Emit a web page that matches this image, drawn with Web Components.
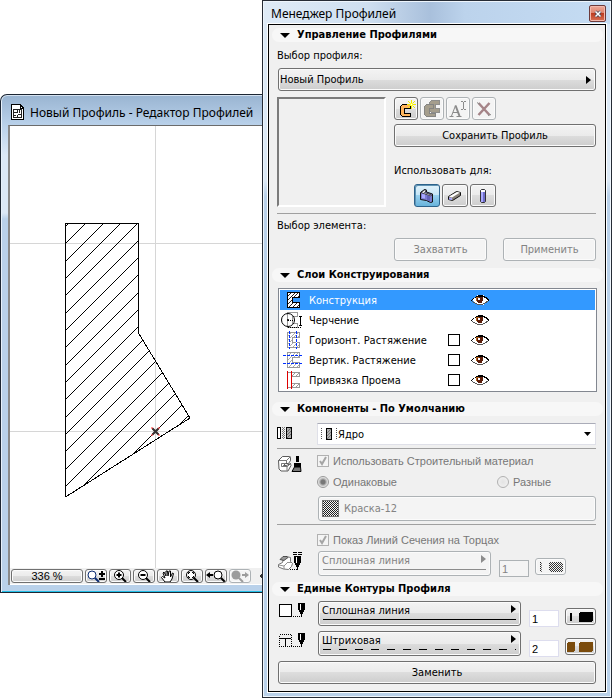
<!DOCTYPE html>
<html lang="ru">
<head>
<meta charset="utf-8">
<title>Менеджер Профилей</title>
<style>
  body { margin: 0; background: #fff; font-family: "DejaVu Sans Condensed", "Noto Sans", sans-serif; font-size: 11px; color: #000; }
</style>
</head>
<body>
<profile-desktop></profile-desktop>
<script>
const NIB = (x, y) => `
  <path d="M${x} ${y}h7v7h-1v2h-1v2h-3v-2h-1v-2h-1z" fill="#000"/><path d="M${x + 3} ${y + 11}h1v3h-1z" fill="#000"/><path d="M${x + 2} ${y + 1}h1v6h-1z" fill="#fff"/>`;

/* C-shaped profile section with diagonal hatching */
const SECTION = (outline, hatch) => `
  <path d="M7 2h13v6h-7v5h7v5h-13z" fill="#fff"/>
  <path d="M8 6l3-3M8 10l7-7M8 14l5-5M13 8l5-5M17 8l2-2M9 17l4-4M13 17l4-4M17 17l2-2" stroke="${hatch}" fill="none"/>
  <path d="M7.500 2.500h12v5h-7v5h7v5h-12z" fill="none" stroke="${outline}"/>`;

const ICONS = {
  page: [13, 16, `<path d="M1 .5h8l3.500 3.500v11.500h-12v-15z" fill="#fff" stroke="#000"/><path d="M9 .5v3.500h3.500" fill="none" stroke="#000"/><path d="M2.500 5.500h8v8h-8zM6.500 5.500v3M2.500 8.500h4M6.500 10.500h4M6.500 10.500v3M8.500 5.500v3M2.500 11.500h2" fill="none" stroke="#222"/>`],
  close: [8, 8, `<path d="M1.500 1.500l5 5M6.500 1.500l-5 5" stroke="#454556" stroke-width="3"/><path d="M1.500 1.500l5 5M6.500 1.500l-5 5" stroke="#fff" stroke-width="1.500"/>`],
  tri: [10, 5, `<path d="M0 0h10L5 5z"/>`],
  newProfile: [20, 18, `<path d="M4.500 6.500l2-2h8v4h-6v5h6v3h-8l-2-2z" fill="#ffb65e" stroke="#000"/><path d="M15 0h1v9h-1zM11 4h9v1h-9z" fill="#f4ec00"/><path d="M12 1l7 7M19 1l-7 7" stroke="#f4ec00"/><path d="M14 3h3v3h-3z" fill="#ff3"/><path d="M15 4h1v1h-1z" fill="#fff"/>`],
  copyProfile: [20, 18, `<path d="M7.500 2.500l2-2h8v4h-4v4h4v4h-8l-2-2z" fill="#a59e8d" stroke="#8e8e8c"/><path d="M2.500 6.500l2-2h7v4h-4v5h6v3h-9l-2-2z" fill="#a59e8d" stroke="#858583"/>`],
  text: [20, 18, `<path d="M1.500 16.500h4M8.500 16.500h5M3.500 16L7.500 5.500M5 12.500h5" fill="none" stroke="#8a8a8a"/><path d="M7.500 5.500L11.500 16" stroke="#8a8a8a" stroke-width="2"/><path d="M13 1.500h2M16 1.500h2M15.500 2v7M13 9.500h2M16 9.500h2" fill="none" stroke="#8a8a8a"/>`],
  del: [20, 18, `<path d="M4.500 3l11 12M15.500 3l-11 12" stroke="#a58488" stroke-width="2.500"/><path d="M3 2.500l3 2M14 15.500l3-1" stroke="#8c8c8c"/>`],
  wall: [18, 16, `<path d="M2.500 4.500l4-3 2 .5v2l6 2v8l-2 .500-4-2-6-1z" fill="#7c7bd0" stroke="#111"/><path d="M3 4.500l3.500-2.500 2 .5-2 2 7 2.500-1 1z" fill="#f4f4f4" stroke="#111" stroke-width=".7"/><path d="M9 7l3 1.500v5L9 12z" fill="#6362b9"/><path d="M4 6l3 .5v4L4 10z" fill="#aaa9ff"/>`],
  beam: [18, 16, `<path d="M2.500 8.500l8-5 4 1v3l-8 5-4-1z" fill="#888078" stroke="#111"/><path d="M3 8.500l8-4.500 3 .5-8 5z" fill="#fff"/><path d="M3 9.500l3 .5v2l-3-.5z" fill="#aaa9ff"/>`],
  column: [18, 16, `<path d="M6.500 2.500l1-1h3l1 1v11l-1 1h-3l-1-1z" fill="#6e6dc8" stroke="#333"/><path d="M7 2h4v2H7z" fill="#fff"/><path d="M7 4h2v10H7z" fill="#aaa9ff"/>`],
  layerSolid: [24, 20, SECTION("#000", "#222")],
  layerDraw: [24, 20, `<path d="M7.500 2.500h10v4h-5v7h5v4h-10z" fill="#fff" stroke="#999"/><circle cx="8" cy="10" r="6.500" fill="none" stroke="#000" shape-rendering="auto"/><circle cx="8" cy="10" r="1" shape-rendering="auto"/><path d="M8 10.500h7" stroke="#000" stroke-dasharray="1 1"/><path d="M20 7h1v9h-1zM19 6h3v1h-3zM19 15h3v1h-3z"/><path d="M8 17.500h14" stroke="#000" stroke-dasharray="1 1"/>`],
  layerH: [24, 20, SECTION("#999", "#aaa") + `<path d="M9 1h1v18h-1zM16 1h1v18h-1z" fill="#fff"/><path d="M9.500 1v18M16.500 1v18" stroke="#0030ff" stroke-dasharray="3 1"/>`],
  layerV: [24, 20, SECTION("#999", "#aaa") + `<path d="M3 5h20v1h-20zM3 13h20v1h-20z" fill="#fff"/><path d="M3 5.500h20M3 13.500h20" stroke="#0030ff" stroke-dasharray="3 1"/>`],
  layerOpen: [24, 20, `<path d="M7.500 2.500h12v4h-8v7h8v4h-12z" fill="#fff" stroke="#999"/><path d="M12 6l3-3M16 6l3-3M12 17l3-3M16 17l3-3" stroke="#999"/><path d="M7 1h1v18h-1zM11 1h1v18h-1z" fill="#e00000"/>`],
  eye: [18, 12, `<path d="M1 6l3-3 3-2h5l3 2 3 3-3 3-3 2H7L4 9z" fill="#fff"/><path d="M0 6h1V5h1V4h2V3h1V2h2V1h5v1h2v1h2v1h1v1h1v2h-1V6h-1V5h-1V4h-2V3H5v1H3v1H2v1H1v1H0z" fill="#000"/><path d="M1 7h1v1h2v1h2v1h6V9h2V8h1V7h2v1h-1v1h-2v1h-2v1H6v-1H4V9H2V8H1z" fill="#555"/><path d="M5 3h7v4h-1v2H7V8H6V6H5z" fill="#5a1d0a"/><path d="M5 3h3v1H6v3H5z" fill="#b5651d"/><path d="M7 4h2v2H7z" fill="#fff"/>`],
  component: [16, 14, `<path d="M.5 1.500h3v11h-3z" fill="#fff" stroke="#000"/><path d="M5.500 1v12M7.500 1v12" stroke="#777" stroke-dasharray="1 1"/><path d="M6.500 2v12" stroke="#777" stroke-dasharray="1 1"/><path d="M10 2h4v10h-4z" fill="#aaa"/><path d="M10 6l4-4M10 9l4-4M10 12l4-4" stroke="#666"/><path d="M9.500 1.500h5v11h-5z" fill="none" stroke="#000"/>`],
  core: [18, 14, `<path d="M.5 1v12M15.500 1v12" stroke="#555" stroke-dasharray="1 1"/><path d="M6 2h4v10h-4z" fill="#b0b0b0"/><path d="M6 6l4-4M6 9l4-4M6 12l4-4" stroke="#777"/><path d="M5.500 1.500h5v11h-5z" fill="none" stroke="#000"/>`],
  brush: [26, 18, `<path d="M1.500 5.500l4-4h7l1 1v3l-2 3h-3l-2 2h3l4-2 .5 2-3 5.500h-7l-2-2z" fill="#fff" stroke="#333" stroke-width=".8"/><path d="M1.500 5.500h8l4-4M9.500 5.500v3M4.500 8.500h4M4.500 8.500v3h6l3-3M10 11.500v4" fill="none" stroke="#555" stroke-width=".8"/><path d="M19 1h3v6h-3zM17 8h7v4h-7z" fill="#000"/><path d="M17.500 12h6l.5 4.500h-9z" fill="#777" stroke="#000"/>`],
  endNib: [26, 20, `<g shape-rendering="auto"><path d="M.5 12.500l4-2 1-4 3-2 4 1v4l2 2-1 3-3 3-5-.500-5-2z" fill="#fff" stroke="#555" stroke-width=".8"/><path d="M2 7.500l3-3h4l1 1-4 3z" fill="#999" stroke="#333" stroke-width=".8"/><path d="M1 13l5 1 4-4M6 14v3M10 10.500h4" fill="none" stroke="#777" stroke-width=".8"/></g><path d="M15 .5h10M15 2.500h10" stroke="#000" stroke-dasharray="4 1"/>${NIB(16, 4)}<path d="M12 17.500h7" stroke="#000" stroke-dasharray="1 1"/>`],
  contour: [28, 16, `<path d="M1.500 2.500h12v12h-12z" fill="#fff" stroke="#000"/>${NIB(20, 1)}<path d="M15 14.500h8" stroke="#000" stroke-dasharray="1 1"/>`],
  inner: [28, 16, `<path d="M1.500 2.500h12v12h-12z" fill="none" stroke="#000" stroke-dasharray="1 1"/><path d="M2 6.500h11M7.500 7v7" stroke="#000"/>${NIB(20, 1)}<path d="M15 14.500h8" stroke="#000" stroke-dasharray="1 1"/>`],
  penOff: [27, 12, `<defs><pattern id="pk" width="2" height="2" patternUnits="userSpaceOnUse"><path d="M0 0h1v1H0zM1 1h1v1H1z" fill="#333"/></pattern></defs><path d="M3.500 1v10" stroke="#222" stroke-dasharray="1 1"/><path d="M4.500 2v9" stroke="#777" stroke-dasharray="1 1"/><rect x="12" y="1" width="14" height="10" rx="3" fill="url(#pk)"/>`],
  penBlack: [27, 12, `<path d="M3 2h2v8H3z"/><rect x="12" y="1" width="14" height="10" rx="2"/>`],
  penBrown: [27, 12, `<g fill="#7a4b0c"><rect x="0" y="1" width="8" height="10" rx="2"/><rect x="12" y="1" width="14" height="10" rx="2"/></g>`],
  swatch: [17, 17, `<defs><pattern id="sw" width="2" height="2" patternUnits="userSpaceOnUse"><path d="M0 0h1v1H0zM1 1h1v1H1z" fill="#222"/></pattern></defs><path d="M.5.5h16v16H.5z" fill="url(#sw)" stroke="#777"/>`],
  zoomPm: [20, 12, `<circle cx="6" cy="5" r="4" fill="#fff" stroke="#0b2c72"/><path d="M9 8l4 4" stroke="#0b2c72" stroke-width="2"/><path d="M13 4h6M16 1v6M13 9h6" stroke="#000" stroke-width="2"/>`],
  zoomIn: [20, 12, `<circle cx="9" cy="5" r="4.500" fill="#fff" stroke="#000"/><path d="M12 8l4 4" stroke="#000" stroke-width="2"/><path d="M6.500 5h5M9 2.500v5" stroke="#000" stroke-width="2"/>`],
  zoomOut: [20, 12, `<circle cx="9" cy="5" r="4.500" fill="#fff" stroke="#000"/><path d="M12 8l4 4" stroke="#000" stroke-width="2"/><path d="M6.500 5h5" stroke="#000" stroke-width="2"/>`],
  hand: [20, 12, `<path d="M7 12L3.500 7.500l1-1L7 8 5 3l1-1 2 4V1h1.500L10 6l1-5h1.500v6l2-4 1 .5L14 9l-2 3z" fill="#fff" stroke="#000"/>`],
  fit: [20, 12, `<circle cx="9" cy="5" r="4.500" fill="#fff" stroke="#000"/><path d="M12 8l4 4" stroke="#000" stroke-width="2"/><path d="M6.500 4V2.500H8M10 2.500h1.500V4M6.500 6v1.500H8M10 7.500h1.500V6" fill="none" stroke="#000"/>`],
  prev: [20, 12, `<path d="M0 5l4-3v2h3v2H4v2z"/><circle cx="12" cy="5" r="4" fill="#fff" stroke="#000"/><path d="M15 8l4 4" stroke="#000" stroke-width="2"/>`],
  next: [20, 12, `<circle cx="6" cy="5" r="4.500" fill="#9c9c9c"/><path d="M9 8l4 4" stroke="#9c9c9c" stroke-width="2"/><path d="M19 5l-4-3v2h-3v2h3v2z" fill="#9c9c9c"/>`],
  back: [5, 8, `<path d="M5 0v8L0 4z" fill="#333"/>`]
};

/* Control styles shared by the elements that hold form controls */
const CONTROLS = `
  * { box-sizing: border-box; }
  button, select, input { font: inherit; color: inherit; margin: 0; padding: 0; }
  label { white-space: nowrap; }
  .bevel { border: 1px solid #707070; border-radius: 3px; background-color: #dedede;
    background-image: linear-gradient(#f3f3f3, #ebebeb 50%, #dddddd 50%, #cdcdcd); box-shadow: inset 0 0 0 1px #fbfbfb; }
  .bevel:disabled { border-color: #adb2b5; background-color: #f4f4f4; background-image: none; color: #838383; opacity: 1; }
`;

function define(name, html, init) {
  const template = document.createElement("template");
  template.innerHTML = html;
  customElements.define(name, class extends HTMLElement {
    constructor() {
      super();
      this.attachShadow({ mode: "open" }).append(template.content.cloneNode(true));
    }
    connectedCallback() {
      if (this.ready) return;
      this.ready = true;
      if (init) init(this, this.shadowRoot);
    }
  });
}

define("ui-icon", `<style>:host{display:block;flex:none} svg{display:block}</style>`, (el, root) => {
  const [w, h, body] = ICONS[el.getAttribute("name")];
  const smooth = el.hasAttribute("smooth") ? "" : ' shape-rendering="crispEdges"';
  root.innerHTML += `<svg width="${w}" height="${h}" viewBox="0 0 ${w} ${h}"${smooth} aria-hidden="true">${body}</svg>`;
});

/* Bevelled button: text or an icon in its slot */
define("push-button", `<style>${CONTROLS}
  :host { display: block; }
  button { display: flex; align-items: center; justify-content: center; width: 100%; height: 100%; font-size: 11px; overflow: hidden; }
  :host([pressed]) button { border-color: #2c628b; background-image: linear-gradient(#e1f2fb, #c4e5f6 50%, #98d1ef 50%, #68b3db); box-shadow: inset 1px 1px 0 #5f93b4; }
  :host([tool]) button { font-family: "Liberation Sans", sans-serif; }
</style><button class="bevel" type="button"><slot></slot></button>`, (el, root) => {
  const b = root.querySelector("button");
  b.disabled = el.hasAttribute("off");
  if (el.hasAttribute("label")) b.setAttribute("aria-label", el.getAttribute("label"));
  if (el.hasAttribute("pressed")) b.setAttribute("aria-pressed", "true");
});

/* Pop-up list: bevelled face, right arrow, optional line sample under the text */
const arrow = c => `url("data:image/svg+xml,%3Csvg xmlns='http://www.w3.org/2000/svg' width='5' height='8'%3E%3Cpath d='M0 0v8l5-4z' fill='%23${c}'/%3E%3C/svg%3E")`;
define("popup-select", `<style>${CONTROLS}
  :host { display: block; min-width: 0; --face: linear-gradient(#f3f3f3, #ebebeb 50%, #dddddd 50%, #cdcdcd); --ink: #000; --arrow: ${arrow("000")}; }
  :host([off]) { --face: linear-gradient(#f4f4f4, #f4f4f4); --ink: #8c8c8c; --arrow: ${arrow("8c8c8c")}; }
  .box { display: grid; height: 100%; align-items: center; }
  select, ui-icon { grid-area: 1 / 1; }
  ui-icon { margin-left: 4px; pointer-events: none; z-index: 1; }
  select.bevel { appearance: none; width: 100%; height: 100%; font-size: 11px; padding: 0 16px 0 1px;
    background-image: var(--arrow), var(--face); background-repeat: no-repeat; background-position: right 4px center, 0 0; }
  :host([sample]) select.bevel { padding: 0 16px 6px 3px; --line: linear-gradient(var(--ink), var(--ink));
    background-image: var(--arrow), var(--line), var(--face);
    background-size: 5px 8px, calc(100% - 8px) 1px, 100% 100%; background-position: right 4px top 3px, 4px 17px, 0 0; }
  :host([sample="dash"]) select.bevel { --line: repeating-linear-gradient(90deg, var(--ink) 0 8px, transparent 8px 16px); }
  :host([icon]) select.bevel { padding-left: 25px; background-position: right 4px top 4px, 0 0; }
</style><div class="box"><select class="bevel"><option></option></select></div>`, (el, root) => {
  const s = root.querySelector("select");
  s.options[0].textContent = el.getAttribute("value");
  s.setAttribute("aria-label", el.getAttribute("label"));
  s.disabled = el.hasAttribute("off");
  if (el.hasAttribute("icon")) root.querySelector(".box").insertAdjacentHTML("beforeend", `<ui-icon name="${el.getAttribute("icon")}"></ui-icon>`);
});

/* Collapsible section of the palette */
define("panel-section", `<style>
  :host { display: block; }
  h2 { display: flex; align-items: center; gap: 7px; height: 14px; margin: 0 2px 0 3px; padding-left: 8px; border-radius: 7px; background: #f7f7f7; font-size: 11px; line-height: 14px; white-space: nowrap; }
  .body { padding: 0 9px 0 8px; }
</style><h2><ui-icon smooth name="tri"></ui-icon><span></span></h2><div class="body"><slot></slot></div>`, (el, root) => {
  root.querySelector("span").textContent = el.getAttribute("heading");
});

define("layer-row", `<style>${CONTROLS}
  :host { display: block; font-size: 11px; }
  :host([selected]) { background: #3399ff; color: #fff; }
  .row { display: grid; grid-template-columns: 24px 136px 12px 1fr; column-gap: 4px; align-items: center; height: 20px; }
  input { appearance: none; width: 12px; height: 12px; border: 1px solid #000; background: #fff; display: block; }
  button { border: 0; background: none; display: block; width: 18px; margin-left: 7px; }
  label, .name { padding-left: 1px; white-space: nowrap; }
</style><div class="row"></div>`, (el, root) => {
  const name = el.getAttribute("name"), check = el.hasAttribute("check");
  root.querySelector(".row").innerHTML = `<ui-icon name="${el.getAttribute("icon")}"></ui-icon>` +
    (check ? `<label for="c">${name}</label><input type="checkbox" id="c">` : `<span class="name">${name}</span><span></span>`) +
    `<button type="button" aria-label="Видимость"><ui-icon name="eye"></ui-icon></button>`;
});

/* Disabled tick box or radio with its label */
define("off-choice", `<style>${CONTROLS}
  :host { display: block; font-family: "Liberation Sans", sans-serif; font-size: 11px; color: #777; }
  label { display: flex; align-items: center; gap: 4px; }
  input { appearance: none; display: block; width: 12px; height: 12px; flex: none; border: 1px solid #b1b1b1; background: #f2f2f2; }
  input[type=radio] { border-radius: 50%; background: radial-gradient(#e3e3e3, #f4f4f4); }
  input[type=radio]:checked { background: radial-gradient(#777 0 2px, #aaa 3px, #eee 5px); border-color: #999; }
  input[type=checkbox]:checked { background: #f4f4f4 url("data:image/svg+xml,%3Csvg xmlns='http://www.w3.org/2000/svg' width='10' height='10'%3E%3Cpath d='M2 5l2 3 4-7' fill='none' stroke='%23a5a5a5' stroke-width='2'/%3E%3C/svg%3E") center no-repeat; }
</style><label><input disabled><span></span></label>`, (el, root) => {
  const i = root.querySelector("input");
  i.type = el.getAttribute("type");
  i.checked = el.hasAttribute("on");
  root.querySelector("span").textContent = el.getAttribute("text");
});

/* Line type, pen number and pen colour in one row */
define("pen-row", `<style>${CONTROLS}
  :host { display: block; }
  :host([off]) { padding-right: 30px; }
  .row { display: grid; grid-template-columns: 40px 1fr 30px 37px; height: 25px; }
  ui-icon { padding-top: 1px; }
  popup-select { height: 25px; margin-right: 8px; }
  input { width: 30px; height: 17px; margin-top: 9px; padding: 0 2px; border: 1px solid #dde; background: #fff; font-family: "Liberation Sans", sans-serif; font-size: 11px; }
  input:disabled { background: #f4f4f4; border-color: #adb2b5; color: #838383; }
  push-button { width: 31px; height: 17px; margin: 7px 0 0 6px; }
</style><div class="row"></div>`, (el, root) => {
  const a = n => el.getAttribute(n), off = el.hasAttribute("off");
  root.querySelector(".row").innerHTML = `<ui-icon name="${a("icon")}"></ui-icon>
    <popup-select label="Тип линии" value="${a("line")}" sample="${a("sample")}" ${off ? "off" : ""}></popup-select>
    <input type="text" aria-label="Номер пера" value="${a("number")}" ${off ? "disabled" : ""}>
    <push-button label="Цвет пера" ${off ? "off" : ""}><ui-icon name="${a("pen")}"></ui-icon></push-button>`;
});

define("profile-editor", `<style>
  :host { display: flex; flex-direction: column; box-sizing: border-box; overflow: hidden; border: 1px solid #1c2633; border-right: 0; border-top-left-radius: 7px;
    padding: 0 0 7px 7px; box-shadow: inset 1px 0 0 #e7f1fb, inset 0 1px 0 #d5e2f0, inset 0 -1px 0 #22c0e8;
    background: linear-gradient(#99b4d1, #b9d1ea 30px, #dbe8f6 60px, #dbe8f6 118px, #b9d1ea 124px); }
  header { display: flex; align-items: center; gap: 6px; height: 30px; padding: 4px 0 0 3px; box-sizing: border-box; }
  h1 { margin: 0; font-size: 12px; font-weight: 400; white-space: nowrap; font-family: "Noto Sans", sans-serif; }
  main { border: 1px solid #6b6b6b; border-width: 1px 0 0 2px; border-left-color: #8a8a8a; background: #fff; }
  .canvas { display: block; width: 100%; height: 442px; }
  nav { display: flex; gap: 2px; align-items: center; height: 17px; padding: 0 0 0 1px; background: #f0f0f0; border-bottom: 1px solid #fff; box-sizing: border-box; }
  push-button { width: 22px; height: 14px; flex: none; }
  push-button.scale { width: 72px; }
  .percent { font-size: 11px; }
  .back { margin-left: 6px; }
</style>
<header><ui-icon name="page"></ui-icon><h1>Новый Профиль - Редактор Профилей</h1></header>
<main>
  <svg class="canvas" viewBox="10 126 252 442" preserveAspectRatio="xMinYMin slice" shape-rendering="crispEdges" role="img" aria-label="Сечение профиля">
    <defs><clipPath id="section"><path d="M66 223.500H138.500V333L190 418 66 497z"/></clipPath></defs>
    <path d="M155.500 126V568M10 243.500H262M10 431.500H262" stroke="#d6d6d6"/>
    <g class="hatch" clip-path="url(#section)" stroke="#000"></g>
    <path d="M65.500 497V223.500H138.500V333" fill="none" stroke="#000"/>
    <path d="M138.500 333L190 418 65.500 497" fill="none" stroke="#000"/>
    <path d="M151.500 427.500l8 8M159.500 427.500l-8 8" stroke="#f33" shape-rendering="auto" stroke-width="1.500"/>
    <path d="M152.500 428.500l6 6M158.500 428.500l-6 6" stroke="#333" stroke-width="2" shape-rendering="auto"/>
  </svg>
  <nav aria-label="Масштаб">
    <push-button tool class="scale"><span class="percent">336 %</span></push-button>
    <push-button label="Масштаб"><ui-icon smooth name="zoomPm"></ui-icon></push-button>
    <push-button label="Увеличить"><ui-icon smooth name="zoomIn"></ui-icon></push-button>
    <push-button label="Уменьшить"><ui-icon smooth name="zoomOut"></ui-icon></push-button>
    <push-button label="Панорама"><ui-icon smooth name="hand"></ui-icon></push-button>
    <push-button label="Показать все"><ui-icon smooth name="fit"></ui-icon></push-button>
    <push-button label="Назад"><ui-icon smooth name="prev"></ui-icon></push-button>
    <push-button label="Вперед" off><ui-icon smooth name="next"></ui-icon></push-button>
    <ui-icon class="back" name="back"></ui-icon>
  </nav>
</main>`, (el, root) => {
  /* Hatch lines start every 52/3 px down the left edge, on whole pixels so that they stay one pixel thin */
  let d = "";
  for (let k = -6; k <= 12; k++) d += `M66 ${Math.round(330 + k * 52 / 3)}l140-140`;
  root.querySelector(".hatch").innerHTML = `<path d="${d}"/>`;
});

define("profile-manager", `<style>${CONTROLS}
  :host { display: flex; flex-direction: column; box-sizing: border-box; border: 1px solid #262c36; padding: 0 5px 5px; font-size: 11px;
    background: linear-gradient(90deg, #dfebf7, #cfdff0 30%, #a9c0dc 48%, #bcd3ec 58%, #c5dcf3) 0 0 / 100% 23px no-repeat,
      linear-gradient(#dce9f6 0 180px, #b9d1ea 195px);
    box-shadow: inset 0 0 0 1px #eef5fc; }
  header { display: flex; align-items: center; justify-content: space-between; height: 23px; padding: 2px 0 0 3px; }
  h1 { margin: 0; font: 400 12px "Noto Sans", sans-serif; white-space: nowrap; }
  .close { display: flex; align-items: center; justify-content: center; width: 17px; height: 17px; padding: 0; border: 1px solid #6d3b3b; border-radius: 2px; background: linear-gradient(#eda99a, #dd8069 50%, #bd3c20 50%, #d97155); box-shadow: inset 0 0 0 1px #f2b9ad; }
  .panel { flex: 1; border: 1px solid #000; background: #f0f0f0; padding: 3px 0 6px; display: flex; flex-direction: column; outline: 1px solid #fff; }
  .text { display: block; height: 16px; line-height: 16px; }
  hr { border: 0; height: 1px; background: #a0a0a0; margin: 0; }
  .manage { display: grid; grid-template-columns: 109px 1fr; column-gap: 8px; margin-top: 6px; }
  .preview { height: 110px; border: 2px solid; border-color: #7b7b7b #fff #fff #7b7b7b; }
  .icons, .uses { display: flex; gap: 2px; }
  .icons push-button { width: 24px; height: 23px; }
  .uses push-button { width: 26px; height: 23px; }
  .uses { margin: 5px 0 0 20px; }
  .capture { display: grid; grid-template-columns: 1fr 1fr; gap: 16px; margin: 4px 0 0 117px; }
  .capture push-button, .save, .replace { height: 23px; }
  .list { margin: 6px -1px 0 1px; border: 1px solid #828790; background: #fff; padding: 1px; }
  .split { display: grid; grid-template-columns: 40px 1fr; align-items: start; }
  .combo { display: grid; align-items: center; height: 22px; border: 1px solid #dfe0e8; border-top-color: #aaacb8; background: #fff; }
  .combo select, .combo ui-icon { grid-area: 1 / 1; }
  .combo ui-icon { margin-left: 3px; z-index: 1; pointer-events: none; }
  .combo select { appearance: none; width: 100%; height: 100%; border: 0; padding-left: 20px; font-size: 11px;
    background: url("data:image/svg+xml,%3Csvg xmlns='http://www.w3.org/2000/svg' width='7' height='4'%3E%3Cpath d='M0 0h7L3.500 4z'/%3E%3C/svg%3E") right 4px center no-repeat; }
  .radios { display: grid; grid-template-columns: 180px 1fr; margin: 9px 0 8px; }
  .rows { display: grid; gap: 5px; margin: 5px 0 0 1px; }
</style>
<header><h1>Менеджер Профилей</h1><button class="close" type="button" aria-label="Закрыть"><ui-icon smooth name="close"></ui-icon></button></header>
<div class="panel">
  <panel-section heading="Управление Профилями">
    <span class="text" style="margin:6px 0 4px">Выбор профиля:</span>
    <popup-select style="height:23px;margin-left:1px" label="Выбор профиля" value="Новый Профиль"></popup-select>
    <div class="manage">
      <div class="preview"></div>
      <div>
        <div class="icons">
          <push-button label="Новый"><ui-icon name="newProfile"></ui-icon></push-button>
          <push-button label="Дублировать" off><ui-icon name="copyProfile"></ui-icon></push-button>
          <push-button label="Переименовать" off><ui-icon smooth name="text"></ui-icon></push-button>
          <push-button label="Удалить" off><ui-icon smooth name="del"></ui-icon></push-button>
        </div>
        <push-button class="save" style="margin:4px 0 16px">Сохранить Профиль</push-button>
        <span class="text">Использовать для:</span>
        <div class="uses">
          <push-button label="Стена" pressed><ui-icon smooth name="wall"></ui-icon></push-button>
          <push-button label="Балка"><ui-icon smooth name="beam"></ui-icon></push-button>
          <push-button label="Колонна"><ui-icon smooth name="column"></ui-icon></push-button>
        </div>
      </div>
    </div>
    <hr style="margin:6px 0 4px">
    <span class="text">Выбор элемента:</span>
    <div class="capture"><push-button off>Захватить</push-button><push-button off>Применить</push-button></div>
  </panel-section>
  <panel-section heading="Слои Конструирования" style="margin-top:7px">
    <div class="list">
      <layer-row selected icon="layerSolid" name="Конструкция"></layer-row>
      <layer-row icon="layerDraw" name="Черчение"></layer-row>
      <layer-row check icon="layerH" name="Горизонт. Растяжение"></layer-row>
      <layer-row check icon="layerV" name="Вертик. Растяжение"></layer-row>
      <layer-row check icon="layerOpen" name="Привязка Проема"></layer-row>
    </div>
  </panel-section>
  <panel-section heading="Компоненты - По Умолчанию" style="margin-top:10px">
    <div class="split" style="margin:7px 0 3px">
      <ui-icon name="component" style="margin-top:3px"></ui-icon>
      <div class="combo"><select aria-label="Компонент"><option>Ядро</option></select><ui-icon name="core"></ui-icon></div>
    </div>
    <hr>
    <div class="split" style="margin:6px 0 3px">
      <ui-icon smooth name="brush"></ui-icon>
      <div>
        <off-choice type="checkbox" on text="Использовать Строительный материал"></off-choice>
        <div class="radios"><off-choice type="radio" on text="Одинаковые"></off-choice><off-choice type="radio" text="Разные"></off-choice></div>
        <popup-select style="height:25px;margin-left:1px" off icon="swatch" label="Покрытие" value="Краска-12"></popup-select>
      </div>
    </div>
    <hr>
    <off-choice style="margin:9px 0 5px 40px" type="checkbox" on text="Показ Линий Сечения на Торцах"></off-choice>
    <pen-row off style="margin-left:1px" icon="endNib" line="Сплошная линия" sample="solid" number="1" pen="penOff"></pen-row>
  </panel-section>
  <panel-section heading="Единые Контуры Профиля" style="margin-top:6px">
    <div class="rows">
      <pen-row icon="contour" line="Сплошная линия" sample="solid" number="1" pen="penBlack"></pen-row>
      <pen-row icon="inner" line="Штриховая" sample="dash" number="2" pen="penBrown"></pen-row>
      <push-button class="replace">Заменить</push-button>
    </div>
  </panel-section>
</div>`);

/* Two windows side by side; the editor runs on under the palette's edge */
define("profile-desktop", `<style>
  :host { display: grid; grid-template-columns: minmax(0, 1fr) 350px; align-items: start; min-height: 100vh; }
  profile-editor { margin-top: 94px; }
  profile-manager { min-height: 100vh; }
</style><profile-editor></profile-editor><profile-manager></profile-manager>`);
</script>
</body>
</html>
